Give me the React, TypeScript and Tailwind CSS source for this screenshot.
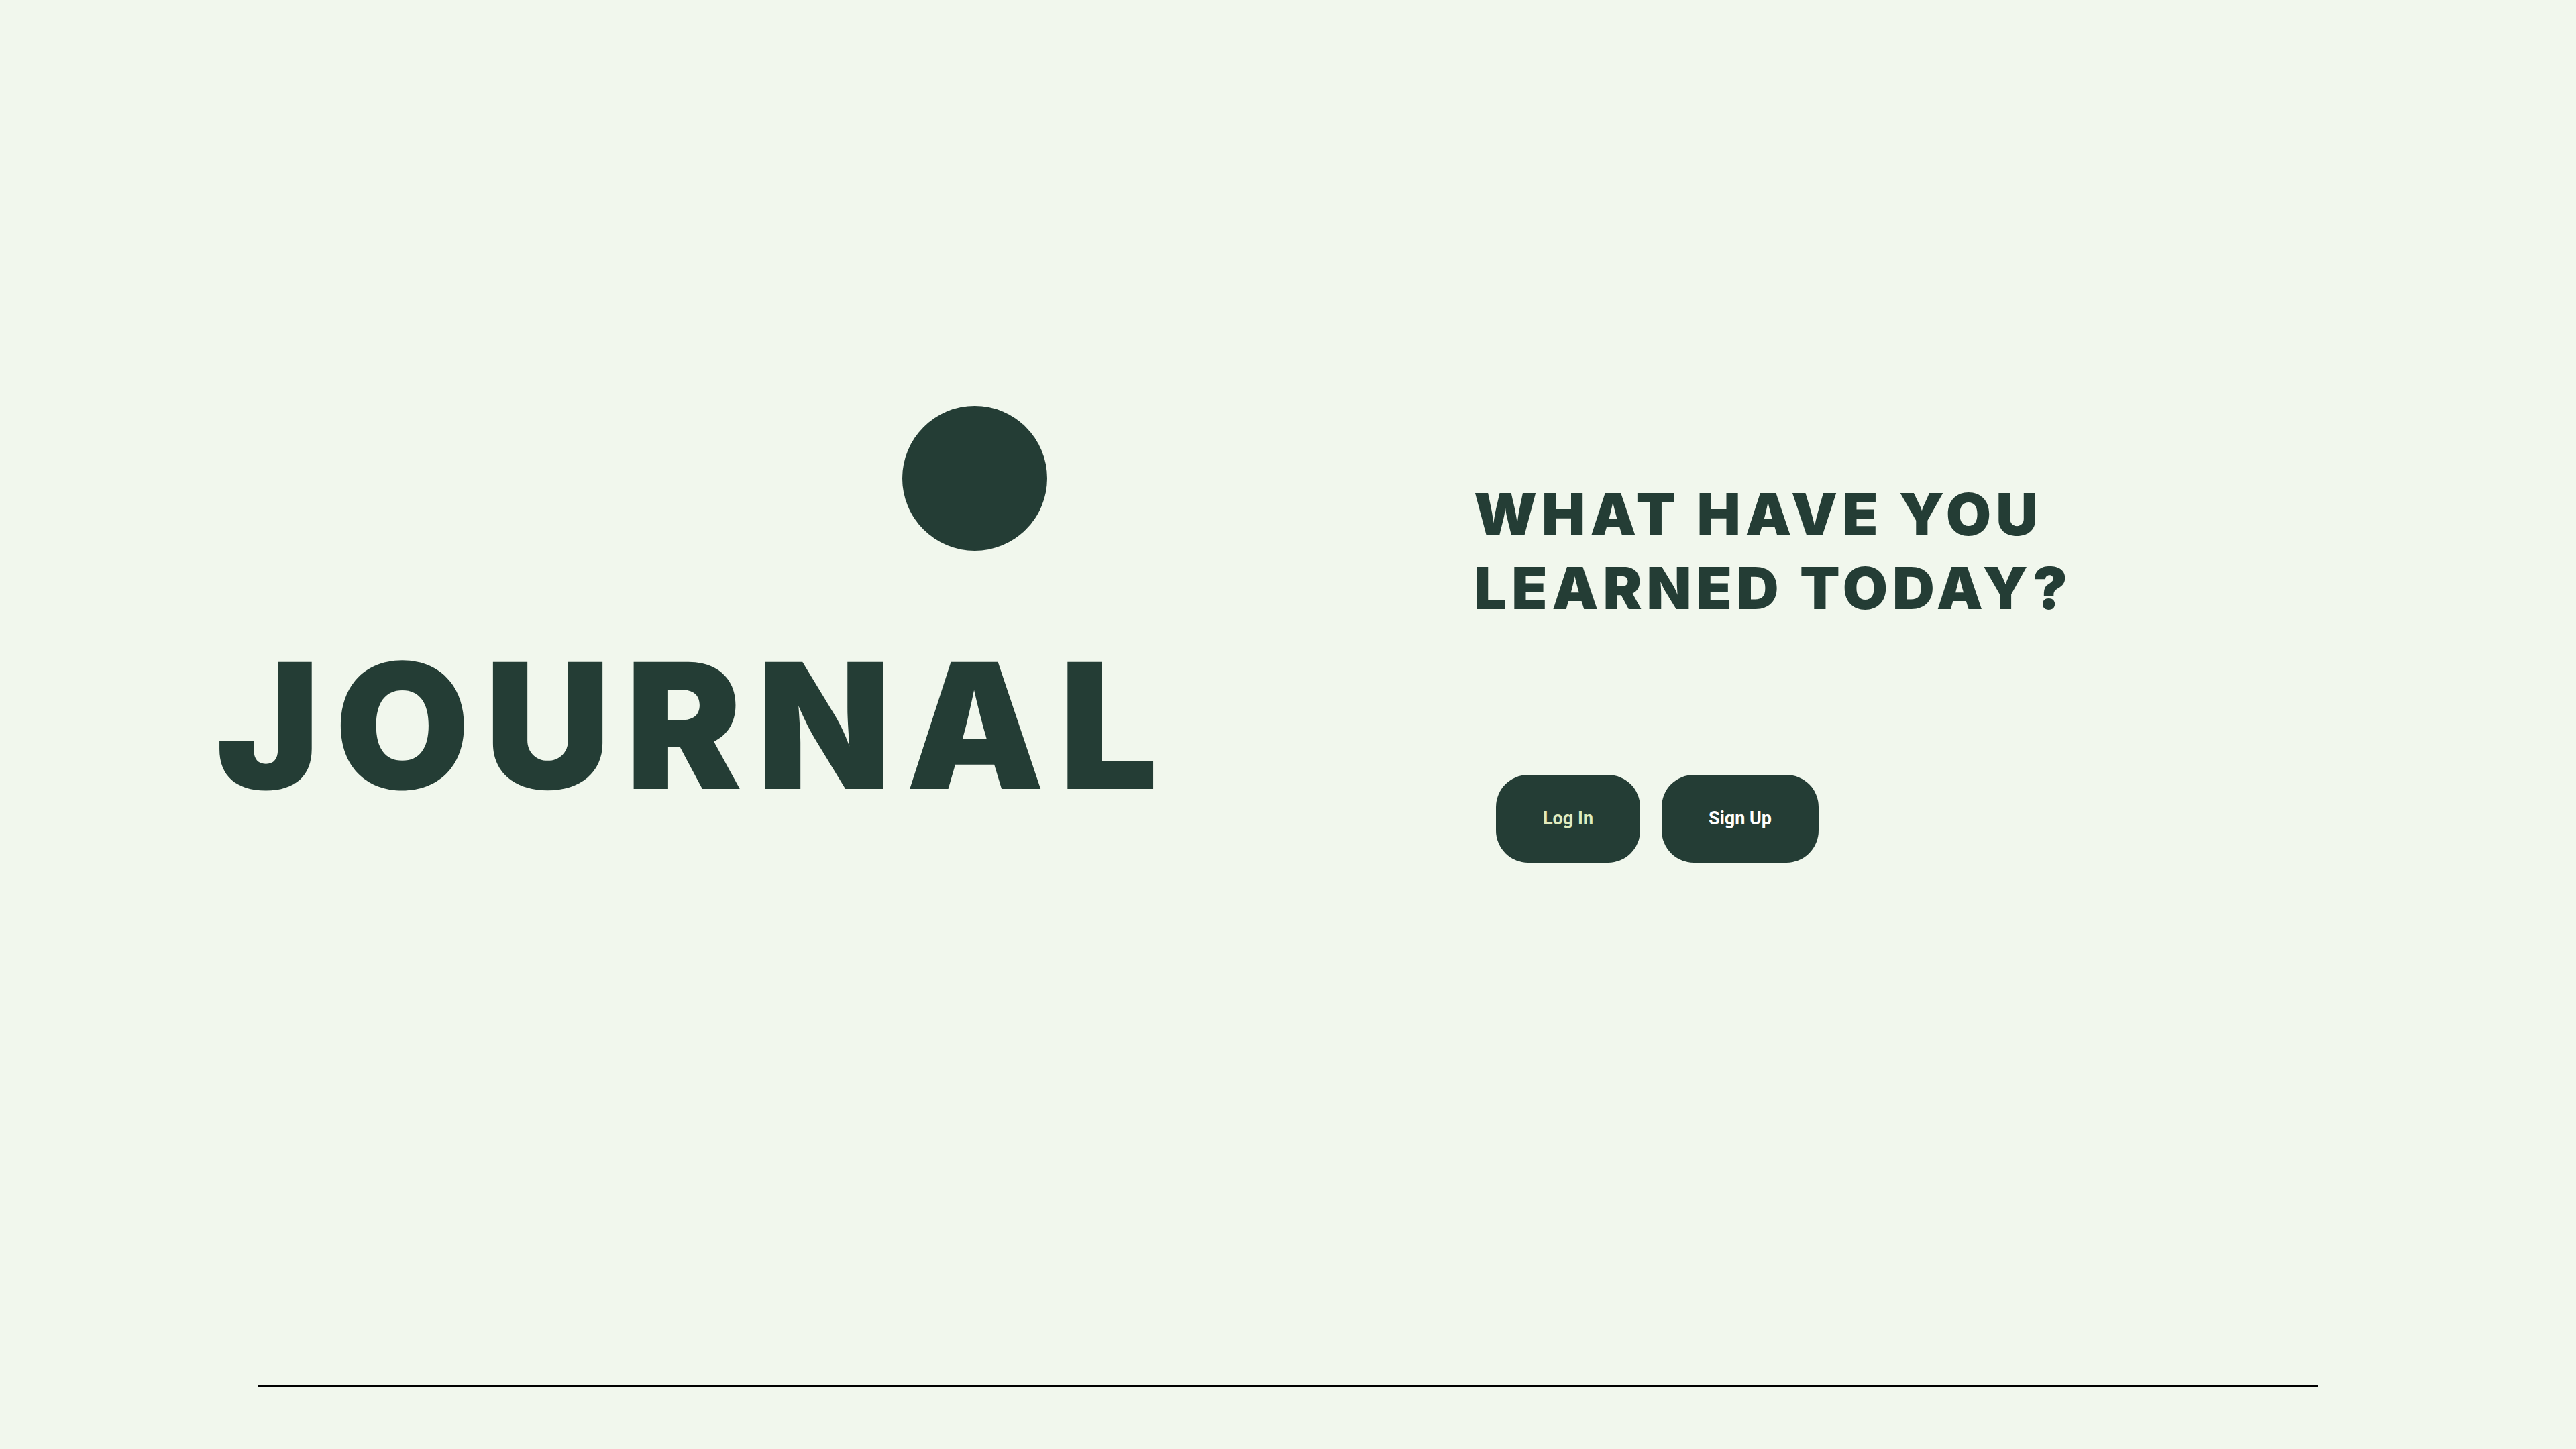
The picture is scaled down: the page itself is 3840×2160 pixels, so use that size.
import React from "react";

export default function App() {
  return (
    <div className="min-h-screen bg-[#f1f7ed] flex flex-col font-['Inter',_'Liberation_Sans',_sans-serif] text-[#243d35]">
      <main className="flex h-[2064px]">
        <section className="w-[2197px] pl-[322px] pt-[605px]">
          <div className="ml-[1023px] h-[216px] w-[216px] rounded-full bg-[#243d35]" />
          <h1 className="mt-[131px] text-[260px] font-black leading-none tracking-[0.085em]">JOURNAL</h1>
        </section>
        <section className="pt-[712px]">
          <h2 className="text-[87px] font-black leading-[110px] tracking-[0.08em]">
            WHAT HAVE YOU
            <br />
            LEARNED TODAY?
          </h2>
          <div className="mt-[223px] ml-[33px] flex gap-[32px]">
            <button className="flex h-[131px] items-center rounded-[48px] bg-[#243d35] px-[70px] font-['Roboto',_sans-serif] text-[27px] font-bold text-[#e0ebbd]">
              Log In
            </button>
            <button className="flex h-[131px] items-center rounded-[48px] bg-[#243d35] px-[70px] font-['Roboto',_sans-serif] text-[27px] font-bold text-white">
              Sign Up
            </button>
          </div>
        </section>
      </main>
      <hr className="mx-auto w-[3072px] border-0 border-t-4 border-black" />
    </div>
  );
}
